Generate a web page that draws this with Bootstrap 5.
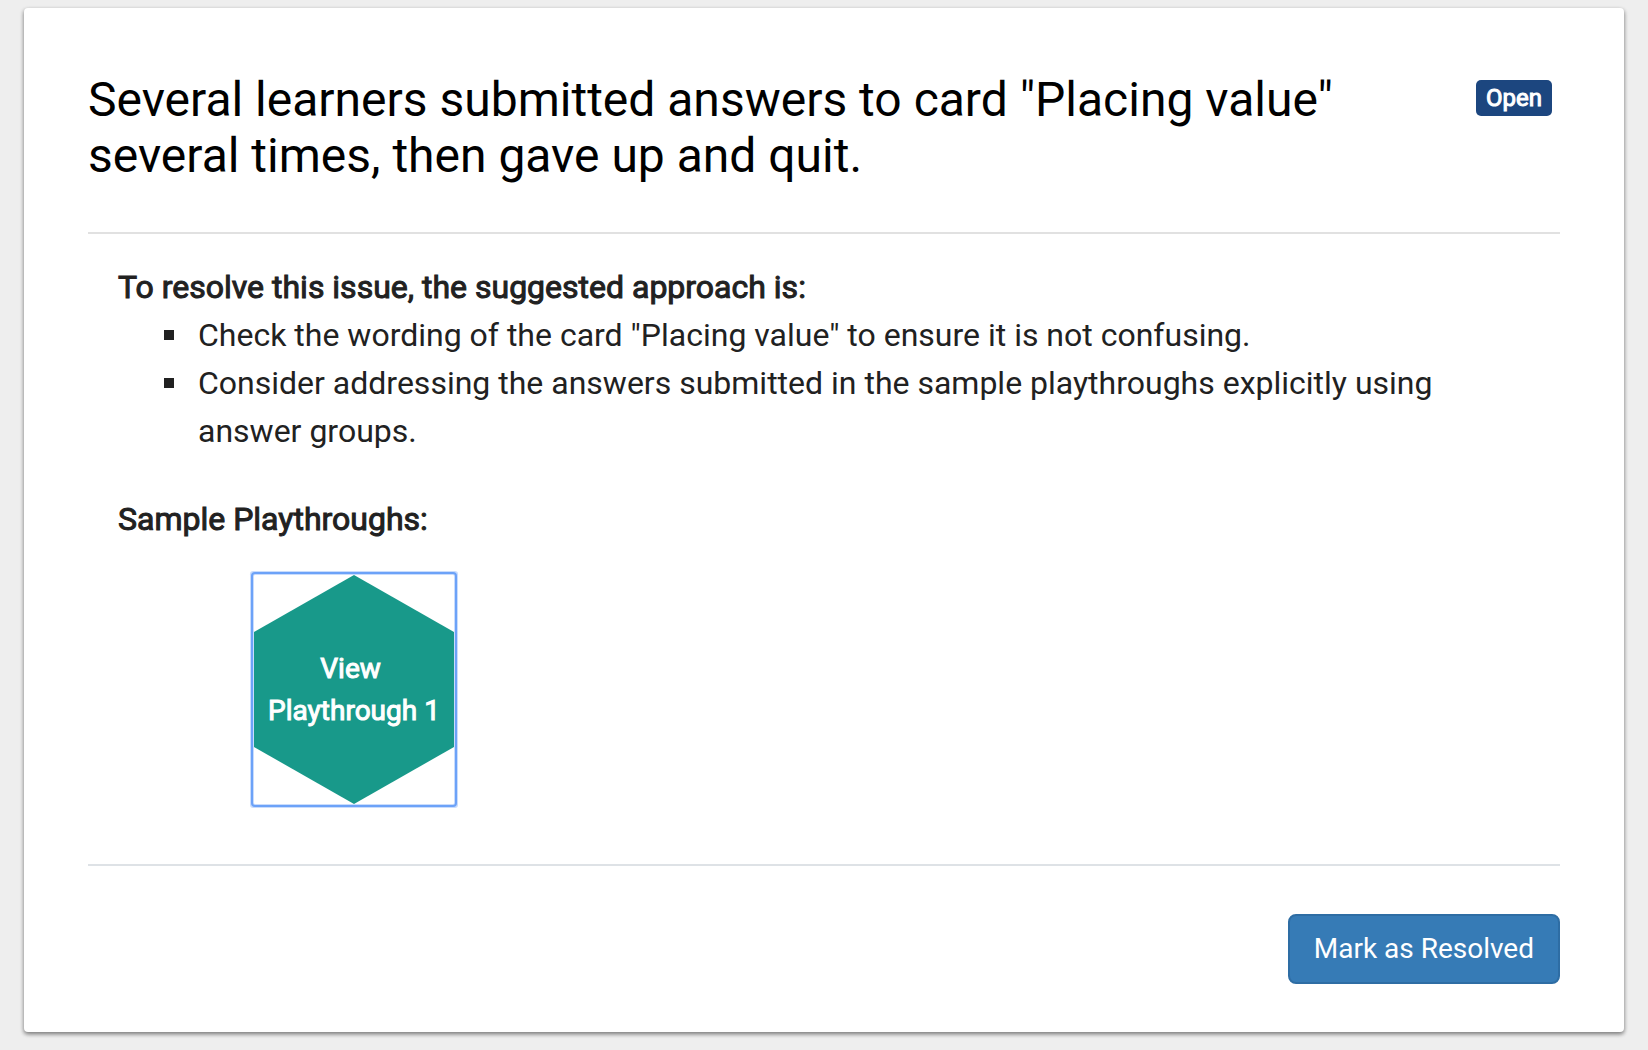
<!DOCTYPE html>
<html lang="en">
<head>
<meta charset="utf-8">
<meta name="viewport" content="width=device-width, initial-scale=1">
<title>Issue</title>
<link href="https://cdn.jsdelivr.net/npm/bootstrap@5.3.0/dist/css/bootstrap.min.css" rel="stylesheet">
<style>
  body { background: #eee; color: #212121; font-family: Roboto, "Liberation Sans", sans-serif; font-size: 32px; line-height: 48px; }
  .issue-card { margin: 8px 24px 18px; padding: 64px 64px 48px; border-radius: 4px; box-shadow: 0 2px 4px rgba(0,0,0,.4), 0 2px 4px rgba(0,0,0,.16); }
  .issue-title { font-size: 48px; line-height: 56px; color: #000; max-width: 1280px; }
  .heavy { font-weight: 400; -webkit-text-stroke: 1px currentColor; }
  .status-tag { margin: 8px 8px 0 0; padding: 0 10px; font-size: 24px; line-height: 36px; border-radius: 5px; background: #1c467f; }
  .rule-top { border-top: 2px solid #e1e1e1; margin-top: 48px; }
  .rule-bottom { border-top: 2px solid #dee2e6; margin-top: 60px; }
  .issue-body { padding: 29px 30px 0; }
  .issue-body h2 { font-size: 32px; line-height: 48px; }
  .steps { padding-left: 46px; margin-bottom: 40px; }
  .steps li::before { content: ""; flex: 0 0 10px; height: 10px; margin: 19px 24px 0 0; background: #212121; }
  .hex-btn { width: 200px; height: 229px; margin: 32px 0 0 136px; padding: 0; font-size: 28px; line-height: 42px; border-radius: 1px; outline: 2px solid #6ca2f8; outline-offset: 1px; box-shadow: 0 0 0 1px #c9dcfc, 0 0 0 4px #c9dcfc; position: relative; background: #fff; }
  .hex-btn svg { position: absolute; inset: 0; }
  .hex-btn span { position: relative; }
  .resolve-btn { margin-top: 48px; padding: 12px 24px; font-size: 28px; line-height: 42px; border: 2px solid #2e6da4; border-radius: 8px; background: #367bb6; }
</style>
</head>
<body>
<main class="issue-card bg-white">
  <header class="d-flex justify-content-between align-items-start">
    <h1 class="issue-title fw-normal mb-0">Several learners submitted answers to card "Placing value" several times, then gave up and quit.</h1>
    <span class="status-tag heavy text-white">Open</span>
  </header>
  <div class="rule-top"></div>
  <section class="issue-body">
    <h2 class="heavy mb-0">To resolve this issue, the suggested approach is:</h2>
    <ul class="steps list-unstyled">
      <li class="d-flex">Check the wording of the card "Placing value" to ensure it is not confusing.</li>
      <li class="d-flex">Consider addressing the answers submitted in the sample playthroughs explicitly using answer groups.</li>
    </ul>
    <h2 class="heavy mb-0">Sample Playthroughs:</h2>
    <button type="button" class="hex-btn heavy d-block border-0 text-white">
      <svg width="200" height="229" viewBox="0 0 200 229" aria-hidden="true"><path fill="#18998a" d="M100 0 200 57V172L100 229 0 172V57z"/></svg>
      <span>View&nbsp;<br>Playthrough 1</span>
    </button>
  </section>
  <div class="rule-bottom"></div>
  <footer class="d-flex justify-content-end">
    <button type="button" class="btn resolve-btn text-white">Mark as Resolved</button>
  </footer>
</main>
<script src="https://cdn.jsdelivr.net/npm/bootstrap@5.3.0/dist/js/bootstrap.bundle.min.js"></script>
</body>
</html>
